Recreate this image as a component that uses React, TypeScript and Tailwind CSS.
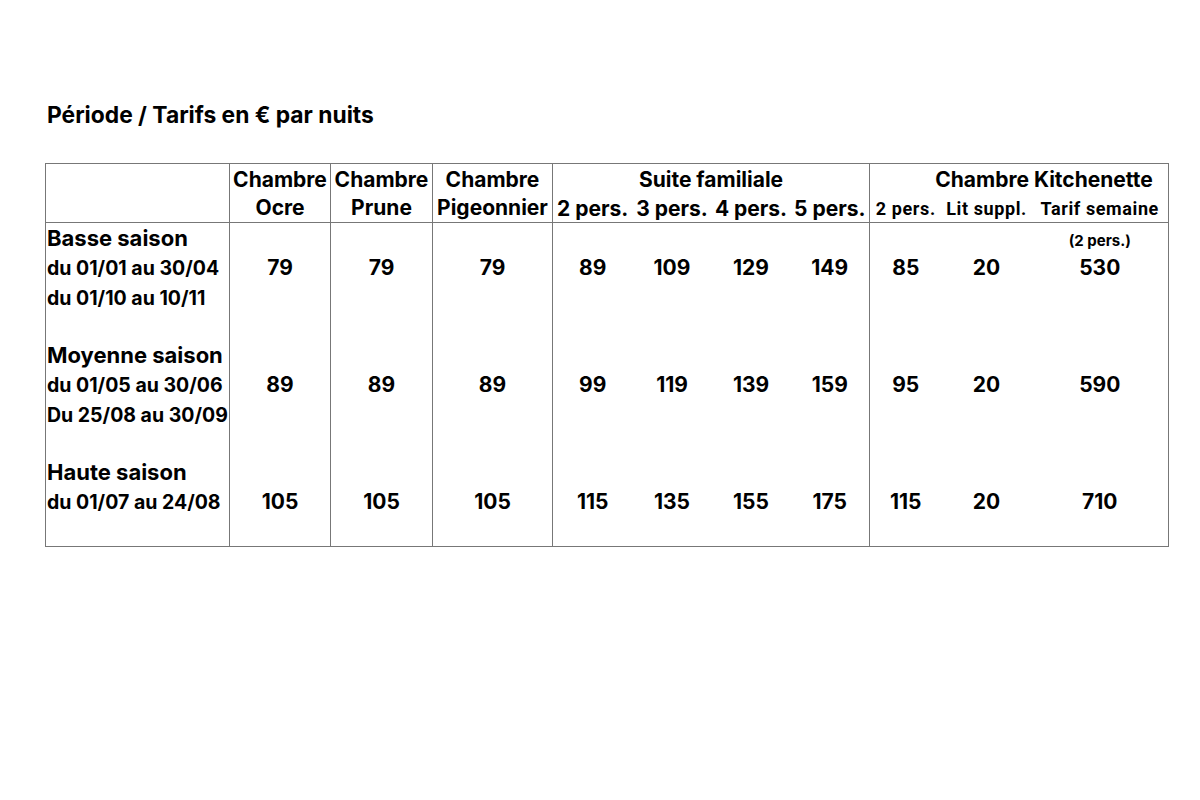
const sans = "font-['Inter','Liberation_Sans',sans-serif]";
const cond = "font-['Roboto','Liberation_Sans',sans-serif]";

type Season = {
  lines: string[];
  values: string[];
  note?: string;
  last?: boolean;
};

const seasons: Season[] = [
  {
    lines: ["Basse saison", "du 01/01 au 30/04", "du 01/10 au 10/11"],
    values: ["79", "79", "79", "89", "109", "129", "149", "85", "20", "530"],
    note: "(2 pers.)",
  },
  {
    lines: ["Moyenne saison", "du 01/05 au 30/06", "Du 25/08 au 30/09"],
    values: ["89", "89", "89", "99", "119", "139", "159", "95", "20", "590"],
  },
  {
    lines: ["Haute saison", "du 01/07 au 24/08"],
    values: ["105", "105", "105", "115", "135", "155", "175", "115", "20", "710"],
    last: true,
  },
];

const widths = [184, 101, 102, 120, 80, 79, 79, 79, 72, 90, 137];
// columns that carry a left rule
const ruled = [1, 2, 3, 4, 8];

function Chambre({ name }: { name: string }) {
  return (
    <th rowSpan={2} className="border-l border-[#777] align-top pt-[1px] font-bold text-[21px] text-center whitespace-nowrap">
      <div className="leading-[29px]">Chambre</div>
      <div className="leading-[28px]">{name}</div>
    </th>
  );
}

export default function App() {
  return (
    <div className={`${sans} bg-white text-black min-h-[800px] pt-[101px] pl-[45px]`}>
      <h1 className="pl-[2px] text-[22.8px] font-bold leading-[28px]">Période / Tarifs en € par nuits</h1>

      <table className="mt-[34px] w-[1123px] table-fixed border-collapse border border-[#777]">
        <colgroup>
          {widths.map((w, i) => (
            <col key={i} style={{ width: w }} />
          ))}
        </colgroup>
        <thead>
          <tr className="h-[30px]">
            <th rowSpan={2} />
            <Chambre name="Ocre" />
            <Chambre name="Prune" />
            <Chambre name="Pigeonnier" />
            <th colSpan={4} className="border-l border-[#777] pt-[2px] align-top text-[21px] font-bold leading-[28px] text-center">
              Suite familiale
            </th>
            <th colSpan={3} className="border-l border-[#777] pt-[2px] pl-[50px] align-top text-[21px] font-bold leading-[28px] text-center">
              Chambre Kitchenette
            </th>
          </tr>
          <tr className="h-[28px] border-b border-[#777]">
            {["2 pers.", "3 pers.", "4 pers.", "5 pers."].map((p, i) => (
              <th key={p} className={`${i === 0 ? "border-l border-[#777]" : ""} align-top pt-[1px] text-[21px] font-bold leading-[27px] text-center whitespace-nowrap`}>
                {p}
              </th>
            ))}
            {["2 pers.", "Lit suppl.", "Tarif semaine"].map((p, i) => (
              <th key={p} className={`${cond} ${i === 0 ? "border-l border-[#777]" : ""} align-top pt-[2px] text-[18px] tracking-[0.6px] font-bold leading-[26px] text-center whitespace-nowrap`}>
                {p}
              </th>
            ))}
          </tr>
        </thead>
        <tbody>
          {seasons.map((s) => (
            <tr key={s.lines[0]}>
              <td className={`${s.last ? "pb-[29px]" : "pb-[27px]"} align-top pl-[1px] font-bold whitespace-nowrap`}>
                {s.lines.map((l, i) => (
                  <div key={l} className={i === 0 ? "h-[30px] text-[22px] leading-[30px]" : "h-[30px] text-[19.5px] leading-[30px]"}>
                    {l}
                  </div>
                ))}
              </td>
              {s.values.map((v, i) => (
                <td
                  key={i}
                  className={`${ruled.includes(i + 1) ? "border-l border-[#777]" : ""} align-top text-center font-bold text-[21px] leading-[30px]`}
                >
                  {i === 9 && s.note ? (
                    <div className="h-[30px] pt-[3px] text-[15px] leading-[30px]">{s.note}</div>
                  ) : (
                    <div className="h-[30px]" />
                  )}
                  <div>{v}</div>
                </td>
              ))}
            </tr>
          ))}
        </tbody>
      </table>
    </div>
  );
}
